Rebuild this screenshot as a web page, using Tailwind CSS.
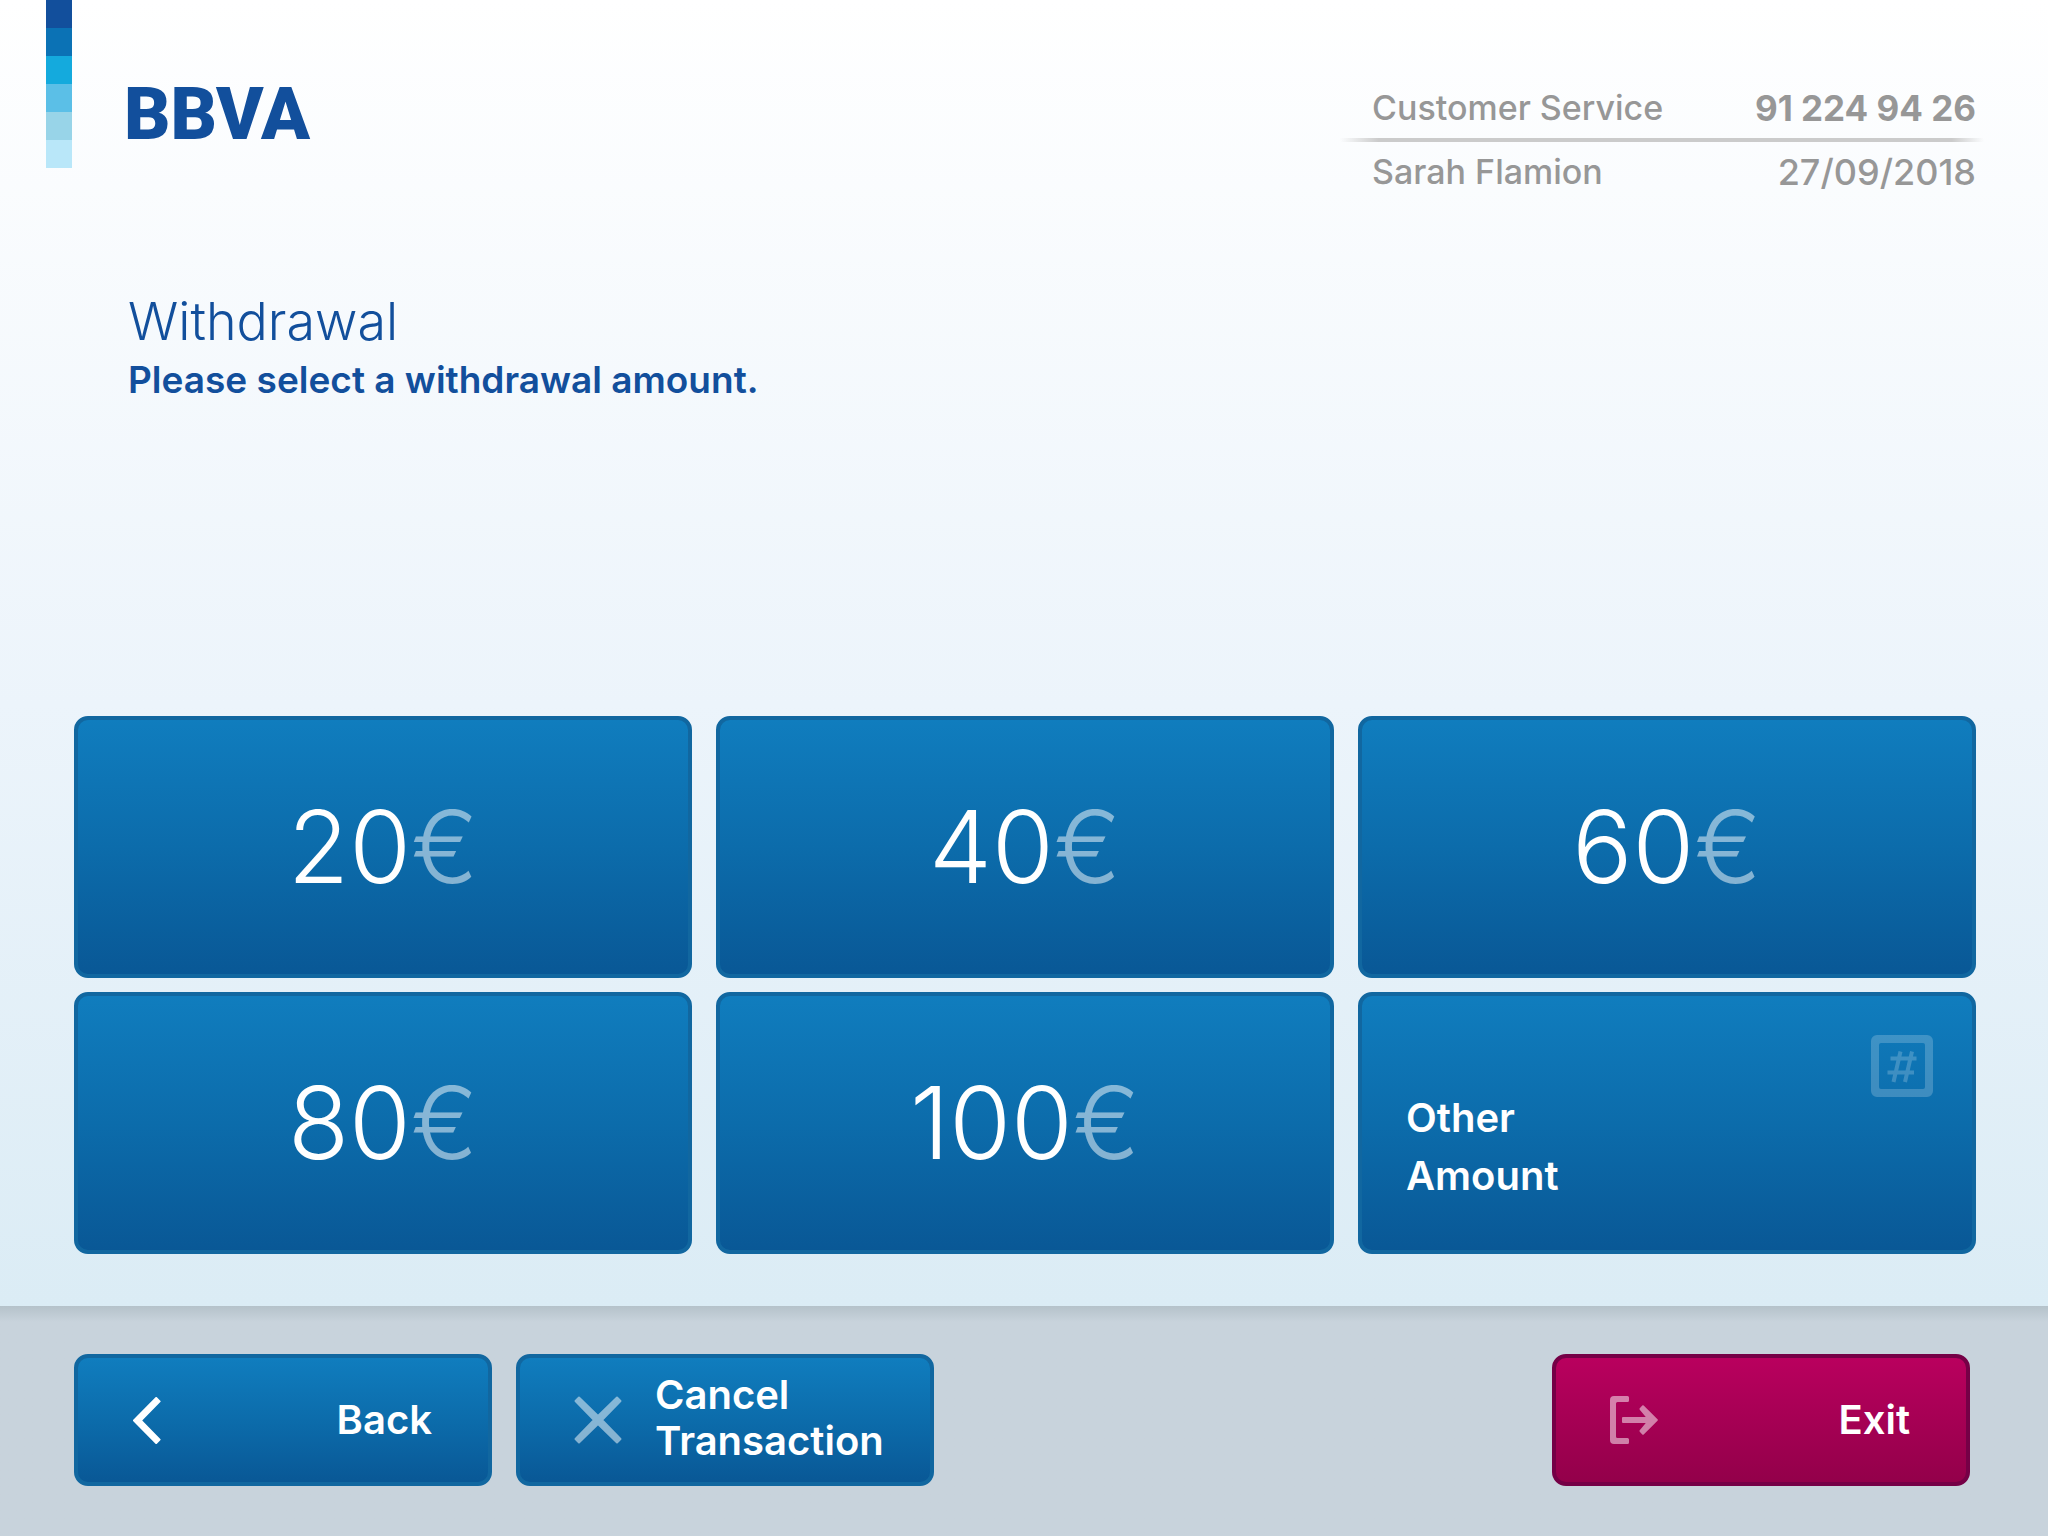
<!DOCTYPE html>
<html lang="en">
<head>
<meta charset="utf-8">
<meta name="viewport" content="width=device-width, initial-scale=1">
<title>BBVA – Withdrawal</title>
<script src="https://cdn.jsdelivr.net/npm/@tailwindcss/browser@4"></script>
</head>
<body class="flex min-h-screen flex-col bg-[#c8d3dc] font-['Inter',sans-serif]">

<main class="flex grow flex-col bg-linear-to-b from-white via-[#ecf4fb] via-54% to-[#dbecf5] pb-[52px]">
  <header class="flex items-start">
    <!-- Brand colour strip -->
    <div class="ml-[46px] w-[26px] shrink-0" aria-hidden="true">
      <div class="h-7 bg-[#124f9c]"></div>
      <div class="h-7 bg-[#0b72b5]"></div>
      <div class="h-7 bg-[#14aadd]"></div>
      <div class="h-7 bg-[#5bbfe7]"></div>
      <div class="h-7 bg-[#98d4e8]"></div>
      <div class="h-7 bg-[#b9e7f9]"></div>
    </div>
    <div class="ml-[52px] pt-[79px] font-['Roboto',sans-serif] text-[72px] leading-[72px] font-black text-[#124f9c]">BBVA</div>

    <div class="mt-[84px] mr-16 ml-auto w-[644px] text-[34px] leading-[48px] font-medium text-[#979797]">
      <div class="flex justify-between pr-2 pl-8">
        <span>Customer Service</span>
        <span class="text-[35px] font-bold">91 224 94 26</span>
      </div>
      <div class="my-1.5 h-1 bg-[linear-gradient(to_right,transparent,#cbcbcb_6%,#cbcbcb_95%,transparent)]"></div>
      <div class="flex justify-between pr-2 pl-8">
        <span>Sarah Flamion</span>
        <time datetime="2018-09-27" class="text-[36px]">27/09/2018</time>
      </div>
    </div>
  </header>

  <section class="mt-24 pl-32 text-[#124f9c]">
    <h1 class="text-[52px] leading-[60px] font-light">Withdrawal</h1>
    <p class="mt-1 text-[37px] leading-[48px] font-semibold">Please select a withdrawal amount.</p>
  </section>

  <section aria-label="Amounts" class="mt-auto grid auto-rows-[262px] grid-cols-3 gap-x-6 gap-y-3.5 pr-[72px] pl-[74px] text-[100px] leading-none font-light text-white">
    <button type="button" class="rounded-[14px] border-4 border-[#1167a0] bg-linear-to-b from-[#107dbe] via-[#0c6cab] to-[#095896]">20<span class="text-white/50">€</span></button>
    <button type="button" class="rounded-[14px] border-4 border-[#1167a0] bg-linear-to-b from-[#107dbe] via-[#0c6cab] to-[#095896]">40<span class="text-white/50">€</span></button>
    <button type="button" class="rounded-[14px] border-4 border-[#1167a0] bg-linear-to-b from-[#107dbe] via-[#0c6cab] to-[#095896]">60<span class="text-white/50">€</span></button>
    <button type="button" class="rounded-[14px] border-4 border-[#1167a0] bg-linear-to-b from-[#107dbe] via-[#0c6cab] to-[#095896]">80<span class="text-white/50">€</span></button>
    <button type="button" class="rounded-[14px] border-4 border-[#1167a0] bg-linear-to-b from-[#107dbe] via-[#0c6cab] to-[#095896]">100<span class="text-white/50">€</span></button>
    <button type="button" class="flex items-start justify-between rounded-[14px] border-4 border-[#1167a0] bg-linear-to-b from-[#107dbe] via-[#0c6cab] to-[#095896] pt-[39px] pr-[39px] pb-[45px] pl-11 text-left text-[40px] leading-[58px] font-semibold">
      <span class="self-end">Other<br>Amount</span>
      <svg class="size-[62px] opacity-20" viewBox="0 0 62 62" fill="none" stroke="#fff" aria-hidden="true">
        <path fill="#fff" stroke="none" fill-rule="evenodd" d="M6 0h50a6 6 0 0 1 6 6v50a6 6 0 0 1-6 6H6a6 6 0 0 1-6-6V6a6 6 0 0 1 6-6zM10 8a2 2 0 0 0-2 2v42a2 2 0 0 0 2 2h42a2 2 0 0 0 2-2V10a2 2 0 0 0-2-2z"/>
        <path stroke-width="4" d="M29.500 16.500L22.500 47M41 16.500L34 47M19.500 23.500H45.500M16.500 37.500H43"/>
      </svg>
    </button>
  </section>
</main>

<footer class="flex items-start bg-linear-to-b from-[#b5c2ca] to-[#c8d3dc] to-[16px] pt-12 pr-[78px] pb-[50px] pl-[74px] text-[40px] leading-[46px] font-semibold text-white">
  <button type="button" class="flex h-[132px] w-[418px] items-center justify-between rounded-[14px] border-4 border-[#1167a0] bg-linear-to-b from-[#107dbe] via-[#0c6cab] to-[#095896] pr-14 pl-[54px]">
    <svg class="h-[47px] w-[30px]" viewBox="0 0 30 47" fill="#fff" stroke="#fff" stroke-width="2" stroke-linejoin="round" aria-hidden="true"><path d="M24.200 1L2 23.500L24.200 46L27.600 42.600L8.800 23.500L27.600 4.400z"/></svg>
    <span>Back</span>
  </button>
  <button type="button" class="ml-6 flex h-[132px] w-[418px] items-center gap-[33px] rounded-[14px] border-4 border-[#1167a0] bg-linear-to-b from-[#107dbe] via-[#0c6cab] to-[#095896] pl-[54px] text-left">
    <svg class="size-12 opacity-50" viewBox="0 0 48 48" fill="#fff" stroke="#fff" stroke-width="2" stroke-linejoin="round" aria-hidden="true"><path d="M5 1.500L24 20L43 1.500L46.500 5L28 24L46.500 43L43 46.500L24 28L5 46.500L1.500 43L20 24L1.500 5z"/></svg>
    <span class="pb-1">Cancel<br>Transaction</span>
  </button>
  <button type="button" class="ml-auto flex h-[132px] w-[418px] items-center justify-between rounded-[14px] border-4 border-[#750046] bg-linear-to-b from-[#b9005e] to-[#93004a] pr-14 pl-[54px]">
    <svg class="size-12 opacity-50" viewBox="0 0 48 48" fill="#fff" aria-hidden="true"><path d="M4 0h13.500a1.500 1.500 0 0 1 1.500 1.500v3a1.500 1.500 0 0 1-1.500 1.500H7.500a1.500 1.500 0 0 0-1.500 1.500v33a1.500 1.500 0 0 0 1.500 1.500h10a1.500 1.500 0 0 1 1.500 1.500v3a1.500 1.500 0 0 1-1.500 1.500H4a4 4 0 0 1-4-4V4a4 4 0 0 1 4-4z"/><path stroke="#fff" stroke-width="2" stroke-linejoin="round" d="M33 10.200L46.800 24L33 37.800L30.500 35L38 26H13V22H38L30.500 13z"/></svg>
    <span>Exit</span>
  </button>
</footer>
</body>
</html>
